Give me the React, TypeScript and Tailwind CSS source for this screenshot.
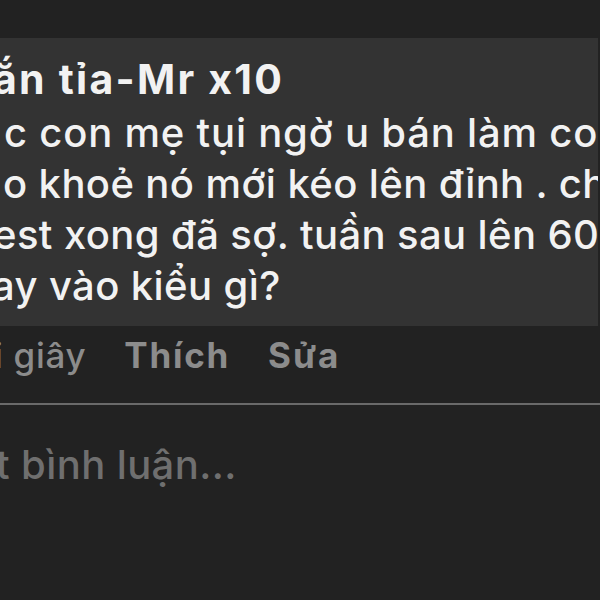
const font = "font-['Inter','Noto_Sans','DejaVu_Sans',sans-serif]";

export default function App() {
  return (
    <div className={`w-[600px] h-[600px] overflow-hidden bg-[#222222] ${font}`}>
      <div className="h-[38px]" />

      {/* comment bubble, cropped on the left */}
      <div className="w-[598px] h-[288px] overflow-hidden bg-[#333333] pt-[18px] text-[#f2f2f2]">
        <div className="ml-[-7px] whitespace-nowrap text-[41px] leading-[46px] font-bold tracking-[0.055em]">ắn tỉa-Mr x10</div>
        <div className="mt-[5px] text-[40px] leading-[51px] font-medium tracking-[0.01em]">
          <div className="ml-[4px] whitespace-nowrap tracking-[0.02em]">c con mẹ tụi ngờ u bán làm co</div>
          <div className="ml-[3px] whitespace-nowrap">o khoẻ nó mới kéo lên đỉnh . chứ</div>
          <div className="ml-[-7px] whitespace-nowrap">est xong đã sợ. tuần sau lên 60</div>
          <div className="ml-[-8px] whitespace-nowrap">ay vào kiểu gì?</div>
        </div>
      </div>

      {/* actions */}
      <div className="flex items-baseline pt-[7px] h-[77px] text-[35px] leading-[44px] text-[#8c8c8c] whitespace-nowrap">
        <span className="ml-[-6px] font-medium tracking-[0.02em]">i giây</span>
        <span className="ml-[38px] font-bold tracking-[0.05em]">Thích</span>
        <span className="ml-[38px] font-bold tracking-[0.055em]">Sửa</span>
      </div>

      <div className="h-[2px] bg-[#6a6a6a]" />

      {/* input */}
      <div className="pt-[36px] text-[40px] leading-[48px] font-medium text-[#6f6f6f] whitespace-nowrap tracking-[0.01em]">
        <span className="ml-[-4px]">t bình luận...</span>
      </div>
    </div>
  );
}
